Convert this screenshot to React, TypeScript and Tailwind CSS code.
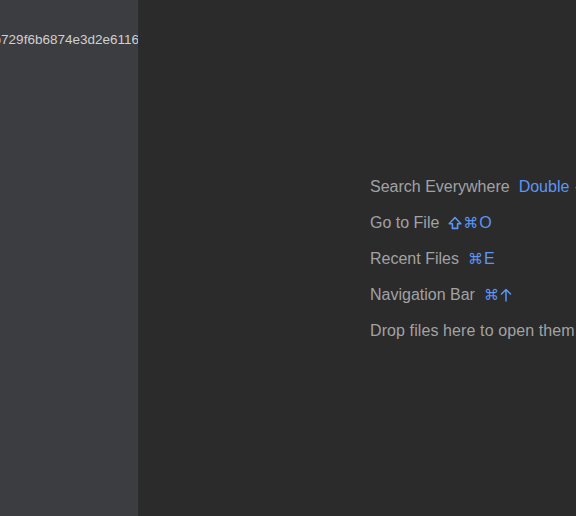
const ShiftIcon = () => (
  <svg viewBox="0 0 14 14" className="w-[14px] h-[14px] inline-block" fill="none" stroke="currentColor" strokeWidth={1.6} strokeLinejoin="round">
    <path d="M7 1.5 L12.8 7.8 H9.6 V12.4 H4.4 V7.8 H1.2 Z" />
  </svg>
);

const UpIcon = () => (
  <svg viewBox="0 0 12 14" className="w-[12px] h-[14px] inline-block" fill="none" stroke="currentColor" strokeWidth={1.5} strokeLinecap="round" strokeLinejoin="round">
    <path d="M6 13 V1.5 M1.5 6 L6 1.5 L10.5 6" />
  </svg>
);

const Cmd = () => <span className="font-['DejaVu_Sans',sans-serif] text-[15px]">⌘</span>;

const shortcuts = [
  { label: "Search Everywhere", keys: <><span className="mr-[5px]">Double</span><ShiftIcon /></> },
  { label: "Go to File", keys: <><ShiftIcon /><Cmd /><span>O</span></> },
  { label: "Recent Files", keys: <><Cmd /><span>E</span></> },
  { label: "Navigation Bar", keys: <><Cmd /><UpIcon /></> },
];

const App = () => {
  return (
    <div className="flex w-[576px] h-[516px] overflow-hidden bg-[#2b2b2b] font-['Liberation_Sans',sans-serif]">
      <div className="w-[139px] shrink-0 bg-[#3c3d40] border-r border-[#2b2d30] flex flex-col">
        <div className="flex justify-end overflow-hidden whitespace-nowrap pt-[31px] text-[13.5px] leading-[17px] text-[#cfd0d2]">
          <span className="-mr-[1px]">7e9c0b729f6b6874e3d2e6116</span>
        </div>
      </div>

      <div className="flex-1 flex flex-col pl-[231px] pt-[169px] whitespace-nowrap">
        {shortcuts.map((s) => (
          <div key={s.label} className="flex items-center h-[36px] text-[16px] leading-[24px]">
            <span className="text-[#a1a2a5]">{s.label}</span>
            <span className="ml-[9px] flex items-center gap-[1px] text-[#5b95f5]">{s.keys}</span>
          </div>
        ))}
        <div className="flex items-center h-[36px] text-[16px] leading-[24px] text-[#a1a2a5] tracking-[0.1px]">
          Drop files here to open them
        </div>
      </div>
    </div>
  );
};

export default App;
